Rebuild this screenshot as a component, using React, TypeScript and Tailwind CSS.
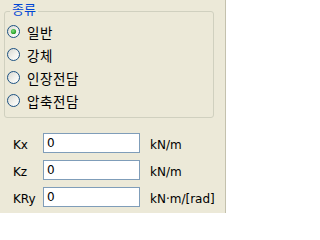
import React from "react";

function Radio({ checked }: { checked?: boolean }) {
  return (
    <svg width="13" height="13" viewBox="0 0 13 13" className="shrink-0">
      <defs>
        <linearGradient id="rbg" x1="0" y1="0" x2="1" y2="1">
          <stop offset="0" stopColor="#d6d6cf" />
          <stop offset="0.6" stopColor="#f4f4f0" />
          <stop offset="1" stopColor="#ffffff" />
        </linearGradient>
        <radialGradient id="rdot" cx="0.4" cy="0.4" r="0.6">
          <stop offset="0" stopColor="#7ee07e" />
          <stop offset="1" stopColor="#1f9a1f" />
        </radialGradient>
      </defs>
      <circle cx="6.5" cy="6.5" r="6" fill="url(#rbg)" stroke="#1c5180" strokeWidth="1" />
      {checked && <circle cx="6.5" cy="6.5" r="2.6" fill="url(#rdot)" />}
    </svg>
  );
}

const options = [
  { label: "일반", checked: true },
  { label: "강체" },
  { label: "인장전담" },
  { label: "압축전담" },
];

const fields = [
  { label: "Kx", unit: "kN/m" },
  { label: "Kz", unit: "kN/m" },
  { label: "KRy", unit: "kN·m/[rad]" },
];

export default function App() {
  return (
    <div className="w-[226px] h-[213px] bg-[#ece9d8] border-r border-[#c4c1ad] pt-[11px] pl-[4px] font-['DejaVu_Sans',sans-serif] text-black overflow-hidden">
      <div className="relative w-[210px] h-[107px] border border-[#d0d0bf] rounded-[3px] pt-[8px] pl-[2px]">
        <span className="absolute left-[5px] top-[-10px] bg-[#ece9d8] px-[2px] text-[13px] leading-[14px] text-[#0046d5] font-['Noto_Sans_CJK_KR',sans-serif]">
          종류
        </span>
        {options.map((o) => (
          <div key={o.label} className="flex items-center h-[23px] gap-[7px]">
            <Radio checked={o.checked} />
            <span className="text-[13.5px] leading-[16px] tracking-[0.6px] font-['Noto_Sans_CJK_KR',sans-serif]">
              {o.label}
            </span>
          </div>
        ))}
      </div>
      <div className="mt-[15px] flex flex-col gap-[7px] text-[12px]">
        {fields.map((f) => (
          <div key={f.label} className="flex items-start h-[20px]">
            <span className="w-[39px] shrink-0 pl-[9px] mt-[2px] leading-[20px]">{f.label}</span>
            <div className="w-[97px] shrink-0 h-[20px] border border-[#7f9db9] bg-white pl-[3px] leading-[18px]">
              0
            </div>
            <span className="ml-[10px] mt-[2px] leading-[20px] whitespace-nowrap">{f.unit}</span>
          </div>
        ))}
      </div>
    </div>
  );
}
